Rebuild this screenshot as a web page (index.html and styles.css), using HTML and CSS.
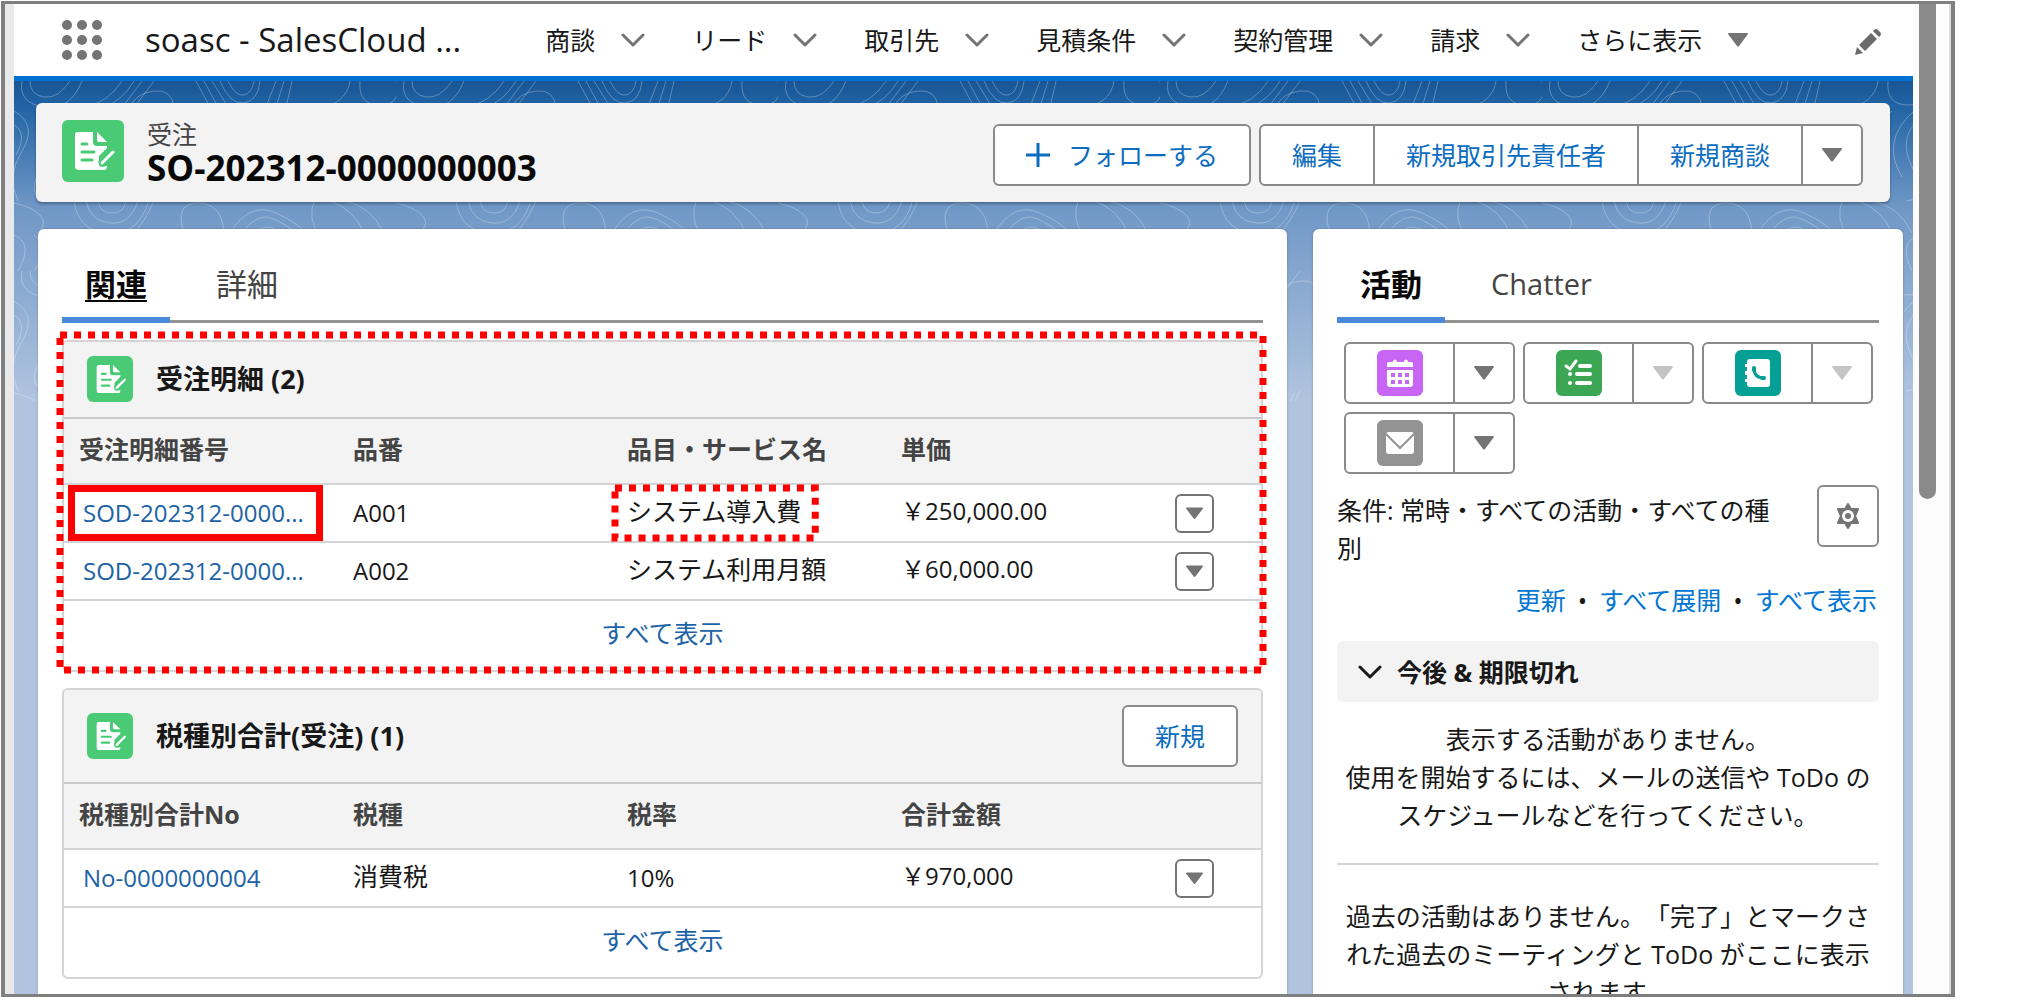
FILE: index.html
```html
<!DOCTYPE html>
<html lang="ja">
<head>
<meta charset="utf-8">
<meta name="viewport" content="width=device-width, initial-scale=1">
<title>SO-202312-0000000003 | 受注</title>
<link rel="stylesheet" href="styles.css">
</head>
<body>
<svg class="defs" aria-hidden="true">
  <symbol id="i-order" viewBox="0 0 62 62">
    <path fill="#fff" d="M16 12h15v10q0 4 4 4h10v2l-8 8v8q0 3 3 3l5-1q0 4-3 4H17q-4 0-4-4V15q0-3 3-3z"/>
    <path fill="#fff" d="M35 12l10 10h-8q-2 0-2-2z"/>
    <path fill="none" stroke="#4bca76" stroke-width="3" stroke-linecap="round" d="M20 24h5M20 32h12M20 40h10"/>
    <path fill="none" stroke="#4bca76" stroke-width="7" stroke-linecap="round" d="M40 42l10-11"/>
    <path fill="none" stroke="#fff" stroke-width="3" stroke-linecap="round" d="M40 43l11-11"/>
  </symbol>
  <symbol id="i-chev" viewBox="0 0 24 14"><path fill="none" stroke="currentColor" stroke-width="3" stroke-linecap="round" stroke-linejoin="round" d="M2 2l10 10L22 2"/></symbol>
  <symbol id="i-tri" viewBox="0 0 20 14"><path fill="currentColor" d="M1 0h18q1 0 1 1l-9 12q-1 1-2 0L0 1q0-1 1-1z"/></symbol>
</svg>
<div class="frame">
  <div class="page">
    <header class="nav">
      <button class="launcher" aria-label="アプリケーションランチャー"><i></i><i></i><i></i><i></i><i></i><i></i><i></i><i></i><i></i></button>
      <span class="app">soasc - SalesCloud ...</span>
      <nav class="menu">
        <a href="#">商談<svg class="chev"><use href="#i-chev"/></svg></a>
        <a href="#">リード<svg class="chev"><use href="#i-chev"/></svg></a>
        <a href="#">取引先<svg class="chev"><use href="#i-chev"/></svg></a>
        <a href="#">見積条件<svg class="chev"><use href="#i-chev"/></svg></a>
        <a href="#">契約管理<svg class="chev"><use href="#i-chev"/></svg></a>
        <a href="#">請求<svg class="chev"><use href="#i-chev"/></svg></a>
        <a href="#">さらに表示<svg class="tri"><use href="#i-tri"/></svg></a>
      </nav>
      <button class="pencil" aria-label="編集"><svg viewBox="0 0 26 26" width="26" height="26"><path fill="currentColor" d="M0 26l2-8 6 6zM4 16L16 4l6 6L10 22zM18 2l1-1q2-2 4 0l2 2q2 2 0 4l-1 1z"/></svg></button>
    </header>
    <main class="stage">
      <svg class="contours" aria-hidden="true">
        <defs>
          <pattern id="topo" width="382" height="190" patternUnits="userSpaceOnUse">
            <g fill="none" stroke="#fff" stroke-opacity=".28" stroke-width="1">
              <path d="M8 0q-4 22 22 26t38-26M16 0q0 14 14 16t26-16M70 26Q94 22 108 0M90 26q18-6 30-26M110 24l18-24M122 24l18-24"/>
              <path d="M182 0l14 26M190 0l14 26M198 0l16 26M206 0q10 24 24 22t16-22M214 0q8 16 16 14t10-14M262 0l-10 26M270 0l-8 26M278 0l-6 26"/>
              <path d="M336 0q-4 24-32 26M346 0q-2 24 20 24t16-24M160 26q-2-18-20-16t-24 16"/>
              <path d="M0 122q18 4 26 12t-2 18M60 120q4 30 34 32t40-30M72 120q4 20 24 22t28-22M84 120q2 12 14 12t14-12M140 120q-10 22-20 32M170 152q-10-30 14-30t26 30"/>
              <path d="M216 152q20-32 46-20t28 20M228 152q16-22 32-14t22 14M240 152q12-12 28 0M300 120q-6 18 4 32M330 120q26 4 40 32M316 120q24 8 34 32"/>
              <path d="M0 30q24 14 8 40t-4 50M0 44q14 8 2 30M382 34q-28 20-12 52t-6 34M372 30q-34 30-12 66M350 30q-30 24-16 60M26 30q24 20 2 56t18 34M0 154q20 8 4 36M376 154q-20 8-6 36M20 154q16 12 0 36"/>
            </g>
          </pattern>
        </defs>
        <rect width="100%" height="100%" fill="url(#topo)"/>
      </svg>
      <section class="record">
        <span class="badge big"><svg><use href="#i-order"/></svg></span>
        <div class="record-name"><span class="kind">受注</span><h1>SO-202312-0000000003</h1></div>
        <button class="btn follow"><svg viewBox="0 0 24 24" width="24" height="24"><path fill="none" stroke="currentColor" stroke-width="3" d="M12 0v24M0 12h24"/></svg>フォローする</button>
        <div class="group">
          <button class="btn">編集</button><button class="btn">新規取引先責任者</button><button class="btn">新規商談</button><button class="btn more" aria-label="その他"><svg class="tri"><use href="#i-tri"/></svg></button>
        </div>
      </section>
      <div class="columns">
        <section class="card">
          <div class="tabs"><a class="tab on line" href="#">関連</a><a class="tab" href="#">詳細</a></div>
          <article class="list">
            <svg class="mark" aria-hidden="true"><rect width="100%" height="100%"/></svg>
            <div class="list-head"><span class="badge"><svg><use href="#i-order"/></svg></span><h2>受注明細 (2)</h2></div>
            <table>
              <thead><tr><th>受注明細番号</th><th>品番</th><th>品目・サービス名</th><th>単価</th><th class="act"></th></tr></thead>
              <tbody>
                <tr><td class="latin"><span class="boxed"><a href="#">SOD-202312-0000...</a></span></td><td class="latin">A001</td><td><span class="dotted">システム導入費<svg class="mark" aria-hidden="true"><rect width="100%" height="100%"/></svg></span></td><td class="latin raised">￥250,000.00</td><td class="act"><button class="mini" aria-label="操作"><svg class="tri"><use href="#i-tri"/></svg></button></td></tr>
                <tr><td class="latin"><a href="#">SOD-202312-0000...</a></td><td class="latin">A002</td><td class="raised">システム利用月額</td><td class="latin raised">￥60,000.00</td><td class="act"><button class="mini" aria-label="操作"><svg class="tri"><use href="#i-tri"/></svg></button></td></tr>
              </tbody>
            </table>
            <a class="all" href="#">すべて表示</a>
          </article>
          <article class="list">
            <div class="list-head tall"><span class="badge"><svg><use href="#i-order"/></svg></span><h2>税種別合計(受注) (1)</h2><button class="btn">新規</button></div>
            <table>
              <thead><tr><th>税種別合計No</th><th>税種</th><th>税率</th><th>合計金額</th><th class="act"></th></tr></thead>
              <tbody>
                <tr><td class="latin"><a href="#">No-0000000004</a></td><td class="raised">消費税</td><td class="latin">10%</td><td class="latin raised">￥970,000</td><td class="act"><button class="mini" aria-label="操作"><svg class="tri"><use href="#i-tri"/></svg></button></td></tr>
              </tbody>
            </table>
            <a class="all" href="#">すべて表示</a>
          </article>
        </section>
        <aside class="card side">
          <div class="tabs"><a class="tab on" href="#">活動</a><a class="tab chatter" href="#">Chatter</a></div>
          <div class="composers">
            <div class="group"><button class="btn act-btn" aria-label="行動"><span class="tile event"><svg viewBox="0 0 46 46"><path fill="#fff" d="M10 17v-3q0-2 2-2h4v-1q2-3 4 0v1h7v-1q2-3 4 0v1h3q2 0 2 2v3zM10 20h26v14q0 3-3 3H13q-3 0-3-3z"/><path stroke="#c865f5" stroke-width="4" stroke-dasharray="4 3" d="M14 25h18M14 32h18"/></svg></span></button><button class="btn more" aria-label="行動のメニュー"><svg class="tri"><use href="#i-tri"/></svg></button></div>
            <div class="group"><button class="btn act-btn" aria-label="ToDo"><span class="tile task"><svg viewBox="0 0 46 46"><path fill="none" stroke="#fff" stroke-width="3" stroke-linecap="round" d="M10 16l4 3 6-8"/><path fill="none" stroke="#fff" stroke-width="4" stroke-linecap="round" d="M24 16h10M21 24h13M21 33h13M14 24h0M14 33h0"/></svg></span></button><button class="btn more" disabled aria-label="ToDoのメニュー"><svg class="tri"><use href="#i-tri"/></svg></button></div>
            <div class="group"><button class="btn act-btn" aria-label="電話"><span class="tile call"><svg viewBox="0 0 46 46"><path fill="#fff" d="M15 9h17q3 0 3 3v22q0 3-3 3H15q-3 0-3-3v-2h-2v-3h2v-4h-2v-4h2v-4h-2v-3h2v-2q0-3 3-3z"/><path fill="none" stroke="#04a095" stroke-width="3" stroke-linecap="round" d="M19 18q0 10 10 10"/><path fill="none" stroke="#04a095" stroke-width="4" stroke-linecap="round" d="M19 18v2M27 28h2"/></svg></span></button><button class="btn more" disabled aria-label="電話のメニュー"><svg class="tri"><use href="#i-tri"/></svg></button></div>
            <div class="group"><button class="btn act-btn" aria-label="メール"><span class="tile mail"><svg viewBox="0 0 46 46"><rect x="9" y="12" width="28" height="22" rx="3" fill="#fff"/><path fill="none" stroke="#939393" stroke-width="2" d="M9 14l14 14 14-14"/></svg></span></button><button class="btn more" aria-label="メールのメニュー"><svg class="tri"><use href="#i-tri"/></svg></button></div>
          </div>
          <div class="filter">
            <p>条件: 常時・すべての活動・すべての種別</p>
            <button class="btn gear" aria-label="設定"><svg viewBox="0 0 26 26" width="26" height="26"><path fill="currentColor" stroke="currentColor" stroke-width="2" stroke-linejoin="round" d="M13 1l3 5h7l-3 7 3 7h-7l-3 5-3-5H3l3-7-3-7h7z"/><circle cx="13" cy="13" r="6" fill="#fff"/><circle cx="13" cy="13" r="3" fill="currentColor"/></svg></button>
          </div>
          <p class="links"><a href="#">更新</a><span>•</span><a href="#">すべて展開</a><span>•</span><a href="#">すべて表示</a></p>
          <button class="section"><svg class="chev"><use href="#i-chev"/></svg>今後 &amp; 期限切れ</button>
          <p class="empty">表示する活動がありません。<br>使用を開始するには、メールの送信や ToDo の<br>スケジュールなどを行ってください。</p>
          <p class="empty past">過去の活動はありません。「完了」とマークさ<br>れた過去のミーティングと ToDo がここに表示<br>されます。</p>
        </aside>
      </div>
    </main>
  </div>
  <div class="scroll"><div class="thumb"></div></div>
</div>
</body>
</html>
```
FILE: styles.css
```css
* { box-sizing: border-box; }
body { margin: 0; background: #fff; color: #181818; font: 25px/38px "Open Sans", "Noto Sans CJK JP", sans-serif; text-spacing-trim: space-all; overflow: hidden; }
h1, h2, p { margin: 0; }
a { color: #1d63a5; text-decoration: none; }
button { font: inherit; color: inherit; margin: 0; padding: 0; border: 0; background: none; white-space: nowrap; }
.defs { position: absolute; width: 0; height: 0; }

.frame { display: flex; height: calc(100vh - 7px); margin: 1px 72px 6px 1px; border: 3px solid #7f7f7f; border-width: 3px 4px; overflow: hidden; }
.page { flex: 1; min-width: 0; border-left: 9px solid #e9e9eb; display: flex; flex-direction: column; }
.scroll { width: 38px; padding-left: 6px; border-right: 2px solid #ddd; background: #fcfcfc; }
.thumb { width: 17px; height: 50%; background: #8a8a8a; border-radius: 0 0 9px 9px; }

.nav { display: flex; align-items: center; flex: none; height: 72px; padding: 0 32px 16px 48px; }
.launcher { display: grid; grid-template-columns: repeat(3, 10px); gap: 5px; margin-top: 16px; }
.launcher i { width: 10px; height: 10px; border-radius: 50%; background: #747474; }
.app { font-size: 33px; margin-left: 43px; white-space: nowrap; }
.app, .menu { padding-top: 16px; }
.menu { display: flex; gap: 47px; margin-left: 84px; }
.menu a { display: flex; align-items: center; gap: 26px; color: #181818; white-space: nowrap; }
.chev { width: 24px; height: 14px; color: #747474; }
.tri { width: 20px; height: 14px; color: #747474; display: block; }
.pencil { margin: 20px 0 0 auto; color: #6b6b6b; }
.pencil svg { display: block; }

.stage { position: relative; flex: 1; min-height: 0; display: flex; flex-direction: column; padding-top: 22px; border-top: 5px solid #0070d2; background: linear-gradient(#195594 0, #1f62a3 22px, #6f97c6 125px, #b0c4df 320px); }
.contours { position: absolute; inset: 0; width: 100%; height: 320px; }
.record { position: relative; display: flex; align-items: center; flex: none; height: 99px; margin: 0 23px 0 22px; padding: 4px 27px 0 26px; border-radius: 6px; background: #f3f3f3; box-shadow: 0 2px 3px rgba(0,0,0,.3); }
.badge { display: block; flex: none; width: 46px; height: 46px; border-radius: 6px; background: #4bca76; }
.badge svg { display: block; width: 100%; height: 100%; }
.badge.big { width: 62px; height: 62px; margin-bottom: 8px; }
.record-name { margin: 0 0 2px 23px; flex: 1; color: #080808; }
.kind { display: block; line-height: 28px; color: #444; }
h1 { font-size: 35px; line-height: 40px; font-weight: 700; }
.btn { display: flex; align-items: center; justify-content: center; height: 62px; padding: 0 31px; border: 2px solid #8a8a8a; border-radius: 6px; background: #fff; color: #0b6cc0; }
.follow { gap: 18px; margin-right: 8px; }
.group { display: flex; }
.group .btn { border-radius: 0; padding: 0 31px; }
.group .btn + .btn { margin-left: -2px; }
.group .btn:first-child { border-radius: 6px 0 0 6px; }
.group .btn:last-child { border-radius: 0 6px 6px 0; }
.group .more { width: 62px; padding: 0; }

.columns { position: relative; flex: 1; min-height: 0; display: grid; grid-template-columns: minmax(0, 1fr) 590px; gap: 26px; margin: 27px 10px 0 24px; }
.card { min-width: 0; padding: 0 24px; border-radius: 6px 6px 0 0; background: #fff; box-shadow: 0 0 2px rgba(0,0,0,.3); overflow: hidden; }
.tabs { display: flex; height: 94px; border-bottom: 3px solid #939393; margin-bottom: 17px; }
.tab { height: 94px; padding: 19px 23px 0; font-size: 31px; line-height: 72px; color: #444; border-bottom: 6px solid transparent; white-space: nowrap; }
.tab + .tab { margin-left: 23px; }
.tab.on { color: #080808; font-weight: 700; border-color: #4a89dc; }
.tab.line { text-decoration: underline; text-decoration-thickness: 2px; text-underline-offset: 4px; }
.tab.chatter { font-size: 29px; }

.list { position: relative; border: 2px solid #d4d4d4; border-radius: 6px; margin-bottom: 16px; }
.list-head { display: flex; align-items: center; height: 77px; padding: 0 23px 2px; border-bottom: 2px solid #c9c9c9; background: #f3f3f3; border-radius: 4px 4px 0 0; }
.list-head.tall { height: 94px; padding-bottom: 0; }
h2 { flex: 1; margin-left: 23px; font-size: 27px; line-height: 38px; font-weight: 700; }
table { width: 100%; table-layout: fixed; border-collapse: separate; border-spacing: 0; }
th, td { height: 58px; padding: 0 0 0 15px; text-align: left; border-bottom: 2px solid #d4d4d4; white-space: nowrap; }
th { height: 66px; width: 274px; padding-bottom: 5px; font-weight: 700; color: #444; background: #f3f3f3; }
.act { width: auto; }
.latin { font-size: 24px; }
.raised { padding-bottom: 4px; }
td a { margin-left: 4px; }
.mini { display: flex; align-items: center; justify-content: center; width: 39px; height: 39px; border: 2px solid #747474; border-radius: 6px; }
.mini .tri { width: 17px; height: 13px; }
.all { display: block; height: 69px; line-height: 64px; text-align: center; }

.mark { position: absolute; inset: -7px 0 0 -4px; width: calc(100% + 6px); height: calc(100% + 7px); overflow: visible; pointer-events: none; z-index: 1; }
.mark rect { fill: none; stroke: #f00; stroke-width: 7px; stroke-dasharray: 7px 7px; }
.boxed { display: block; width: 255px; height: 56px; margin-left: -11px; padding-left: 4px; line-height: 42px; border: 7px solid #f00; }
.dotted { position: relative; display: inline-block; line-height: 46px; padding: 0 14px 4px 12px; margin-left: -12px; }
.dotted .mark { inset: 0; width: 100%; height: 100%; }

.composers { display: flex; flex-wrap: wrap; gap: 8px; margin: 19px 0 0 7px; }
.group .act-btn { width: 111px; padding: 0; }
.tile { display: block; width: 46px; height: 46px; border-radius: 6px; }
.tile svg { display: block; }
.event { background: #c865f5; }
.task { background: #3ba755; }
.call { background: #04a095; }
.mail { background: #939393; }
.more:disabled .tri { color: #c4c4c4; }
.filter { display: flex; justify-content: space-between; margin-top: 11px; }
.filter p { width: 450px; margin-top: 6px; }
.gear { width: 62px; padding: 0; color: #747474; }
.links { display: flex; justify-content: flex-end; gap: 12px; margin-top: 14px; padding-right: 2px; white-space: nowrap; }
.links a { color: #0176d3; }
.section { display: flex; align-items: center; gap: 15px; width: 100%; height: 61px; margin-top: 22px; padding: 0 21px; border-radius: 6px; background: #f3f3f3; font-weight: 700; }
.section .chev { color: #181818; }
.empty { padding: 18px 0 29px; text-align: center; white-space: nowrap; }
.past { border-top: 2px solid #d4d4d4; padding-top: 32px; }
```
